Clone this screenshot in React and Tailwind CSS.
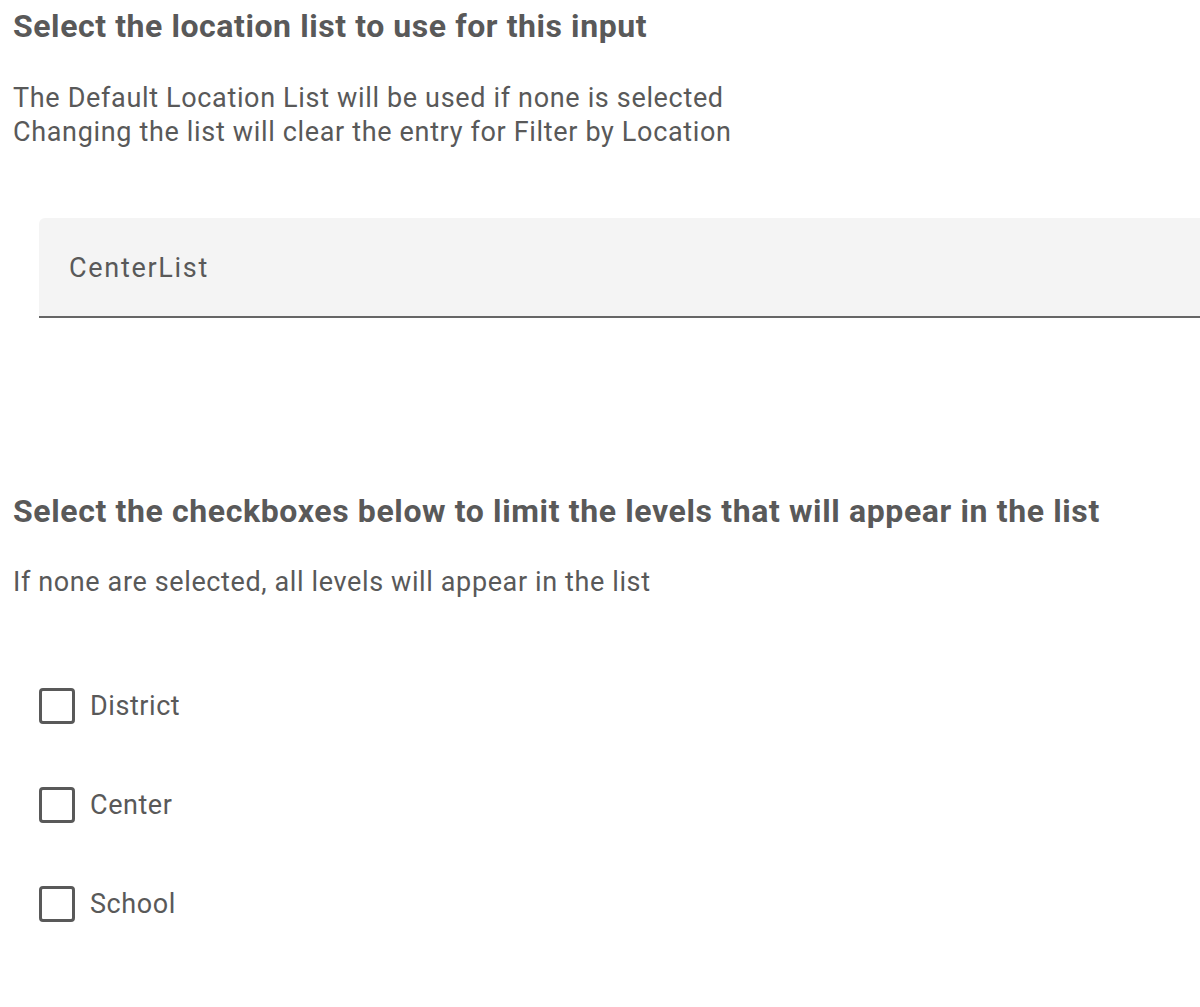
export default function App() {
  const items = ["District", "Center", "School"];
  return (
    <div className="w-[1200px] h-[1007px] overflow-hidden bg-white text-[#595959]" style={{ fontFamily: "Roboto, sans-serif" }}>
      <div className="pl-[13px]">
        <h1 className="text-[32px] font-bold leading-[34px] tracking-[0.57px] pt-[9px] whitespace-nowrap">Select the location list to use for this input</h1>
        <p className="text-[27px] leading-[34px] tracking-[0.66px] mt-[38px] whitespace-nowrap">
          The Default Location List will be used if none is selected
          <br />
          Changing the list will clear the entry for Filter by Location
        </p>
      </div>
      <div className="ml-[39px] mt-[69px] h-[100px] w-[1200px] bg-[#f4f4f4] rounded-tl-[6px] border-b-2 border-[#666] flex items-center">
        <span className="pl-[30px] text-[27px] tracking-[1.7px] pt-[2px]">CenterList</span>
      </div>
      <div className="pl-[13px] mt-[176px]">
        <h2 className="text-[32px] font-bold leading-[34px] tracking-[0.62px] whitespace-nowrap">Select the checkboxes below to limit the levels that will appear in the list</h2>
        <p className="text-[27px] leading-[34px] tracking-[0.62px] mt-[37px] whitespace-nowrap">If none are selected, all levels will appear in the list</p>
      </div>
      <div className="pl-[39px] mt-[89px] flex flex-col gap-[63px]">
        {items.map((t) => (
          <label key={t} className="flex items-center gap-[15px] h-[36px]">
            <span className="w-[36px] h-[36px] border-[3px] border-[#595959] rounded-[4px] box-border shrink-0" />
            <span className="text-[27px] tracking-[0.56px]">{t}</span>
          </label>
        ))}
      </div>
    </div>
  );
}
